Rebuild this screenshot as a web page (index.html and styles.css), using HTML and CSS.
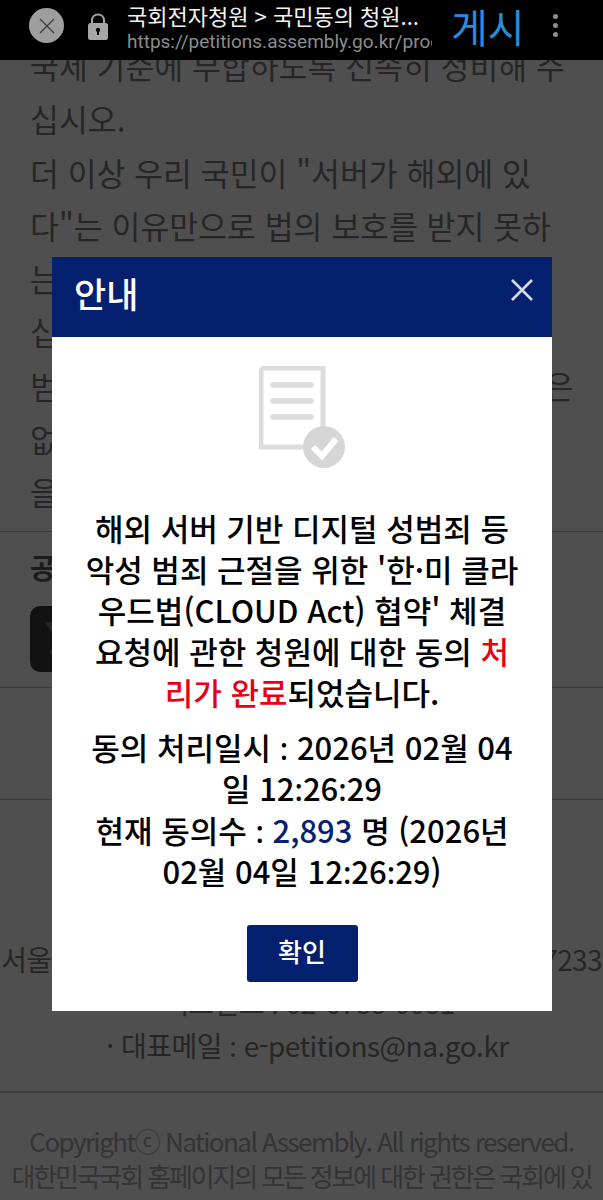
FILE: index.html
```html
<!DOCTYPE html>
<html lang="ko">
<head>
    <meta charset="UTF-8">
    <meta name="viewport" content="width=device-width, initial-scale=1.0">
    <title>국회전자청원</title>
    <link rel="stylesheet" href="styles.css">
</head>
<body>
    <!-- browser toolbar -->
    <header class="toolbar">
        <span class="close-tab">
            <svg width="18" height="18" viewBox="0 0 18 18"><path d="M2 2L16 16M16 2L2 16" stroke="#3c3c3c" stroke-width="1.3" fill="none"/></svg>
        </span>
        <svg class="lock" width="20" height="27" viewBox="0 0 20 27">
            <path d="M4 12V7.5C4 4 6.5 1.5 10 1.5S16 4 16 7.5V12" stroke="#a6a6a6" stroke-width="2" fill="none"/>
            <rect x="0" y="10" width="20" height="17" rx="2.5" fill="#a6a6a6"/>
            <circle cx="10" cy="17" r="2.2" fill="#000"/>
            <rect x="9" y="17" width="2" height="5" fill="#000"/>
        </svg>
        <div class="address">
            <div class="address-title">국회전자청원 &gt; 국민동의 청원...</div>
            <div class="address-url">https://petitions.assembly.go.kr/proceed/onGoingAll</div>
        </div>
        <span class="post-btn">게시</span>
        <span class="more-btn"><i></i><i></i><i></i></span>
    </header>

    <!-- page behind the popup -->
    <div class="page">
        <div class="page-inner">
            <p class="petition-text">
                국제 기준에 부합하도록 신속히 정비해 주<br>
                십시오.<br>
                더 이상 우리 국민이 "서버가 해외에 있<br>
                다"는 이유만으로 법의 보호를 받지 못하<br>
                는 일이 없도록 조속한 조치를 촉구합니<br>
                십시오. 해외 서버를 이용한 디지털 성<br>
                범죄에는 국경이 없고, 그 피해자의 고통은<br>
                없어지지 않습니다. 국회의 적극적인 노<br>
                을 요청합니다.
            </p>
            <div class="share">
                <h3 class="share-title">공유하기</h3>
                <span class="share-x">
                    <svg width="38" height="38" viewBox="0 0 38 38"><path d="M5 4H14L33 34H24ZM31 4L7 34" stroke="#7a7a7a" stroke-width="4" fill="none"/></svg>
                </span>
            </div>
            <footer class="site-footer">
                <div class="footer-info">
                    <p class="footer-address">서울특별시 영등포구 의사당대로 1 국회처 (우) 07233</p>
                    <p>· 팩스번호 <span class="colon">:</span> 02-6788-0081</p>
                    <p class="footer-mail">· 대표메일 <span class="colon">:</span> e-petitions@na.go.kr</p>
                </div>
                <div class="footer-copy">
                    <p>Copyrightⓒ National Assembly. All rights reserved.</p>
                    <p class="footer-rights">대한민국국회 홈페이지의 모든 정보에 대한 권한은 국회에 있</p>
                </div>
            </footer>
        </div>
    </div>

    <!-- popup -->
    <div class="scrim">
        <div class="modal">
            <div class="modal-head">
                <h2 class="modal-title">안내</h2>
                <svg width="24" height="24" viewBox="0 0 24 24"><path d="M2 2L22 22M22 2L2 22" stroke="#d5daea" stroke-width="2.6" fill="none"/></svg>
            </div>
            <div class="modal-body">
                <svg class="doc-icon" width="86" height="102" viewBox="0 0 86 102">
                    <path d="M2 2H64V72M48 81H2V2" stroke="#dcdcdc" stroke-width="5" fill="none"/>
                    <path d="M14 19H52M14 35H52M14 51H52" stroke="#dcdcdc" stroke-width="5.5" stroke-linecap="round" fill="none"/>
                    <circle cx="65" cy="81" r="21" fill="#d6d6d6"/>
                    <path d="M54 81L63 90L77 73" stroke="#fff" stroke-width="6" fill="none"/>
                </svg>
                <p class="modal-msg">해외 서버 기반 디지털 성범죄 등 악성 범죄 근절을 위한 '한·미 클라우드법(CLOUD Act) 협약' 체결 요청에 관한 청원에 대한 동의 <span class="done">처리가 완료</span>되었습니다.</p>
                <p class="modal-info">동의 처리일시 <span class="colon">:</span> 2026년 02월 04일 12<span class="colon">:</span>26<span class="colon">:</span>29<br>현재 동의수 <span class="colon">:</span> <span class="count">2,893</span> 명 (2026년 02월 04일 12<span class="colon">:</span>26<span class="colon">:</span>29)</p>
                <button class="ok-btn">확인</button>
            </div>
        </div>
    </div>
</body>
</html>
```

FILE: styles.css
```css
/* base */
html, body {
    height: 100%;
}

body {
    margin: 0;
    height: 1200px;
    overflow: hidden;
    position: relative;
    background-color: #fff;
    font-family: "Noto Sans CJK JP", "Noto Sans", sans-serif;
    color: #7c7c7c;
}

p, h2, h3 {
    margin: 0;
}

/* the CJK font draws a raised colon */
.colon {
    font-family: "Noto Sans", sans-serif;
    line-height: 0;
}

/* browser toolbar */
.toolbar {
    position: relative;
    z-index: 20;
    display: flex;
    align-items: center;
    box-sizing: border-box;
    height: 60px;
    padding: 0 0 9px 29px;
    background-color: #000;
}

.close-tab {
    display: flex;
    align-items: center;
    justify-content: center;
    width: 35px;
    height: 35px;
    border-radius: 50%;
    background-color: #9e9e9e;
    flex: none;
}

.lock {
    margin: 1px 0 0 24px;
    flex: none;
}

.address {
    width: 305px;
    margin: 0 0 -9px 19px;
    overflow: hidden;
    white-space: nowrap;
    flex: none;
}

.address-title {
    font-size: 22px;
    line-height: 26px;
    color: #f2f2f2;
    margin-top: -2px;
}

.address-url {
    font-family: Roboto, sans-serif;
    font-size: 19px;
    line-height: 28px;
    color: #8c8c8c;
}

.post-btn {
    margin-left: 19px;
    font-size: 40px;
    font-weight: 400;
    line-height: 50px;
    color: #2a8cd8;
    flex: none;
}

.more-btn {
    display: flex;
    flex-direction: column;
    gap: 4px;
    margin-left: 28px;
}

.more-btn i {
    width: 5px;
    height: 5px;
    border-radius: 50%;
    background-color: #8f8f8f;
}

/* page behind the popup */
.page {
    height: 1140px;
    overflow: hidden;
}

.page-inner {
    margin-top: -21px;
}

.petition-text {
    padding: 0 30px;
    font-size: 31.4px;
    line-height: 53.3px;
    white-space: nowrap;
}

.share {
    margin-top: 12px;
    padding: 14px 30px 15px;
    border-top: 1px solid #bdbdbd;
    border-bottom: 1px solid #bdbdbd;
}

.share-title {
    font-size: 28px;
    line-height: 42px;
    color: #5c5c5c;
}

.share-x {
    display: flex;
    align-items: center;
    justify-content: center;
    width: 66px;
    height: 66px;
    margin-top: 18px;
    border-radius: 10px;
    background-color: #3c3c3c;
}

.site-footer {
    margin-top: 111px;
    border-top: 1px solid #bdbdbd;
    text-align: center;
}

.footer-info {
    padding: 138px 0 24px;
    font-size: 28px;
    letter-spacing: -0.5px;
    line-height: 43px;
    white-space: nowrap;
    border-bottom: 2px solid #bdbdbd;
}

.footer-address {
    letter-spacing: -0.7px;
}

.footer-mail {
    padding-left: 12px;
}

.footer-copy {
    padding-top: 30px;
    font-size: 26px;
    letter-spacing: -1.55px;
    line-height: 35px;
    white-space: nowrap;
    color: #a8a8a8;
}

.footer-rights {
    letter-spacing: -2.15px;
}

/* popup */
.scrim {
    position: absolute;
    top: 0;
    right: 0;
    bottom: 0;
    left: 0;
    z-index: 10;
    background-color: rgba(0, 0, 0, 0.69);
}

.modal {
    width: 500px;
    height: 754px;
    margin: 257px 0 0 52px;
    background-color: #fff;
}

.modal-head {
    display: flex;
    align-items: center;
    justify-content: space-between;
    height: 80px;
    padding: 0 18px 0 22px;
    background-color: #05206f;
}

.modal-title {
    font-size: 35px;
    font-weight: 500;
    color: #fff;
    line-height: 76px;
    margin-top: -8px;
}

.modal-head svg {
    margin-top: -14px;
}

.modal-body {
    display: flex;
    flex-direction: column;
    align-items: center;
    padding: 29px 32px 0;
    text-align: center;
    color: #000;
}

.doc-icon {
    margin-right: 1px;
    flex: none;
}

.modal-msg {
    margin-top: 39px;
    font-size: 31px;
    font-weight: 500;
    line-height: 41px;
    word-break: break-all;
}

.done {
    color: #e60012;
}

.modal-info {
    margin-top: 14px;
    font-size: 31px;
    font-weight: 500;
    line-height: 41.3px;
    word-break: break-all;
}

.count {
    color: #05206f;
}

.ok-btn {
    width: 111px;
    height: 57px;
    margin-top: 34px;
    border: none;
    border-radius: 3px;
    background-color: #05206f;
    color: #fff;
    font-family: inherit;
    font-size: 26px;
    font-weight: 500;
    padding: 0 0 6px;
}
```
